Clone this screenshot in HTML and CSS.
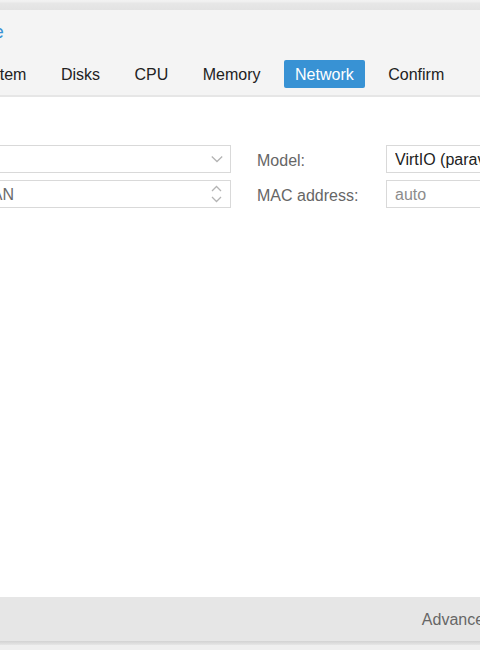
FILE: index.html
```html
<!DOCTYPE html>
<html lang="en">
<head>
<meta charset="utf-8">
<title>Create: Virtual Machine</title>
<link rel="stylesheet" href="styles.css">
</head>
<body>
<div class="window">
  <div class="topstrip"></div>
  <div class="header">
    <div class="title">Create: Virtual Machine</div>
    <div class="tabs">
      <span class="tab">General</span>
      <span class="tab">OS</span>
      <span class="tab">System</span>
      <span class="tab">Disks</span>
      <span class="tab">CPU</span>
      <span class="tab">Memory</span>
      <span class="tab active">Network</span>
      <span class="tab">Confirm</span>
    </div>
  </div>
  <div class="content">
    <div class="form">
      <div class="col col-left">
        <div class="row">
          <span class="lbl">Bridge:</span>
          <div class="field">
            <span class="val"></span>
            <svg class="chev" width="12" height="8" viewBox="0 0 12 8"><polyline points="0.8,1.5 6,6.5 11.2,1.5" fill="none" stroke="#b4b4b4" stroke-width="1.3"/></svg>
          </div>
        </div>
        <div class="row">
          <span class="lbl">VLAN Tag:</span>
          <div class="field">
            <span class="val empty">no VLAN</span>
            <svg class="spin" width="11" height="18" viewBox="0 0 11 18"><polyline points="1,6 5.5,1.5 10,6" fill="none" stroke="#b4b4b4" stroke-width="1.3"/><polyline points="1,12 5.5,16.5 10,12" fill="none" stroke="#b4b4b4" stroke-width="1.3"/></svg>
          </div>
        </div>
      </div>
      <div class="col col-right">
        <div class="row">
          <span class="lbl">Model:</span>
          <div class="field">
            <span class="val">VirtIO (paravirtualized)</span>
          </div>
        </div>
        <div class="row">
          <span class="lbl">MAC address:</span>
          <div class="field">
            <span class="val placeholder">auto</span>
          </div>
        </div>
      </div>
    </div>
  </div>
  <div class="footer">
    <span class="help">Help</span>
    <div class="footer-right">
      <span class="adv">Advanced</span>
      <span class="check"></span>
      <span class="btn">Back</span>
      <span class="btn">Next</span>
    </div>
  </div>
  <div class="footer-shadow"></div>
</div>
</body>
</html>
```
FILE: styles.css
```css
html, body {
  margin: 0;
  padding: 0;
  overflow: hidden;
  background: #efefef;
  font-family: "Liberation Sans", Arial, Helvetica, sans-serif;
  font-size: 16px;
}

.window {
  width: 878px;
  margin-left: -200px;
}

.topstrip {
  height: 10px;
  background: linear-gradient(#f2f2f2 0%, #efefef 20%, #e7e7e7 30%, #e3e3e3 100%);
}

.header {
  background: #f4f4f4;
  padding: 12px 0 7px 0;
  border-bottom: 2px solid #e6e6e6;
}

.title {
  padding-left: 16px;
  color: #3892d4;
  font-size: 18px;
  line-height: 20px;
  white-space: nowrap;
}

.tabs {
  display: flex;
  gap: 12.5px;
  margin-top: 18px;
  padding-left: 13px;
}

.tab {
  box-sizing: border-box;
  padding: 1px 11px 0 11px;
  line-height: 28px;
  height: 28px;
  color: #222222;
  border-radius: 2px;
  white-space: nowrap;
}

.tab.active {
  background: #3892d4;
  color: #ffffff;
}

.content {
  background: #ffffff;
  height: 500px;
  box-sizing: border-box;
  padding: 48px 10px 0 10px;
}

.form {
  display: grid;
  grid-template-columns: 421px 411px;
  column-gap: 26px;
}

.col {
  display: flex;
  flex-direction: column;
  gap: 7px;
}

.row {
  display: flex;
  align-items: center;
  height: 28px;
}

.lbl {
  color: #666666;
  white-space: nowrap;
  flex: none;
  padding-top: 3px;
}

.col-left .lbl { width: 131px; }
.col-right .lbl { width: 129px; }

.field {
  flex: 1;
  height: 28px;
  box-sizing: border-box;
  border: 1px solid #d9d9d9;
  background: #ffffff;
  display: flex;
  align-items: center;
  padding: 0 8px;
  line-height: 26px;
}

.val {
  flex: 1;
  color: #222222;
  white-space: nowrap;
  overflow: hidden;
  padding-top: 2px;
  line-height: 24px;
}

.val.empty { color: #6a6a6a; }
.val.placeholder { color: #8c8c8c; }

.chev {
  flex: none;
  margin-right: -0.5px;
}

.spin {
  flex: none;
  margin-right: 0;
}

.footer {
  height: 44px;
  background: #e6e6e6;
  display: flex;
  align-items: center;
  justify-content: space-between;
  padding: 0 10px;
}

.help {
  color: #444444;
}

.footer-right {
  display: flex;
  align-items: center;
}

.adv {
  color: #666666;
  white-space: nowrap;
  padding-top: 2px;
}

.check {
  width: 13px;
  height: 13px;
  border: 1px solid #b5b5b5;
  background: #ffffff;
  margin-left: 6px;
  box-sizing: border-box;
}

.btn {
  width: 64px;
  text-align: center;
  line-height: 28px;
  margin-left: 8px;
  background: #f6f6f6;
  border: 1px solid #cccccc;
  box-sizing: border-box;
  color: #333333;
}

.check + .btn { margin-left: 20px; }

.footer-shadow {
  height: 4px;
  background: linear-gradient(#d2d2d2, #e6e6e6);
}
```
